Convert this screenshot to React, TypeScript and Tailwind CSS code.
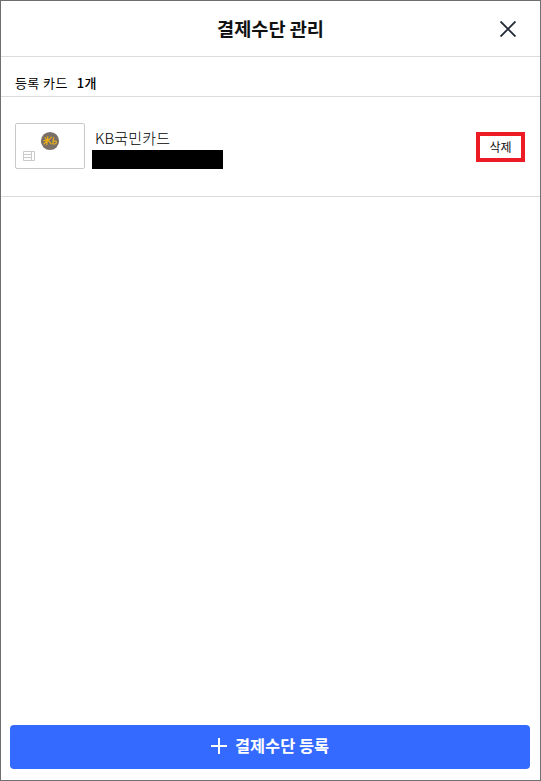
function CloseIcon() {
  return (
    <svg
      className="h-4 w-4"
      viewBox="0 0 16 16"
      fill="none"
      stroke="#222b35"
      strokeWidth="1.9"
    >
      <path d="M0.5 0.5L15.5 15.5M15.5 0.5L0.5 15.5" />
    </svg>
  )
}

function PlusIcon() {
  return (
    <svg className="h-4 w-4" viewBox="0 0 16 16" fill="#fff">
      <path d="M7 0h2v7h7v2H9v7H7V9H0V7h7z" />
    </svg>
  )
}

function CardThumbnail() {
  return (
    <svg
      className="h-[46px] w-[70px] shrink-0"
      viewBox="0 0 70 46"
      fill="none"
    >
      <rect x="0.5" y="0.5" width="69" height="45" rx="1.5" stroke="#c9c9c9" />
      <circle cx="35" cy="18" r="9.1" fill="#7b7068" />
      <g stroke="#f0b010" strokeLinecap="round">
        <path
          d="M28.8 17.8L34.4 16.4M32.8 13.6L31.8 21.8M30 14.6L32 17M32 17.8L29 21M36.4 14.2L33.2 17.4L36.4 21"
          strokeWidth="1.1"
        />
        <path
          d="M38.6 14.6L37.8 20.6C39.2 21.6 42 20.4 41.4 18.8C40.8 17.6 39 17.8 38 19"
          strokeWidth="1.1"
        />
      </g>
      <path
        d="M8.5 28.5h11v9h-11zM16.5 28.5v9M8.5 31.5h8M8.5 34.5h8"
        stroke="#cacaca"
      />
    </svg>
  )
}

const cards = [{ id: 1, name: 'KB국민카드' }]

export default function App() {
  return (
    <div className="flex h-screen flex-col border border-[#6f6f6f] bg-white font-['Noto_Sans_CJK_KR',sans-serif] text-[#111]">
      <header className="flex h-14 shrink-0 items-center border-b border-[#dcdcdf] px-6">
        <h1 className="mb-0.5 ml-4 flex-1 text-center text-[18.6px] leading-6 font-bold whitespace-nowrap">
          결제수단 관리
        </h1>
        <button type="button" aria-label="닫기">
          <CloseIcon />
        </button>
      </header>

      <div className="flex h-10 shrink-0 items-end gap-[9px] border-b border-[#dcdcdf] px-3.5 pb-1 text-[13px] leading-[18px] text-black">
        <span className="tracking-[0.4px]">등록 카드</span>
        <span className="font-medium tracking-[0.4px]">1개</span>
      </div>

      <ul className="flex-1">
        {cards.map((card) => (
          <li
            key={card.id}
            className="flex h-[100px] items-start border-b border-[#dcdcdc] pl-3.5"
          >
            <div className="mt-[26px]">
              <CardThumbnail />
            </div>
            <div className="mt-[29px] ml-[7px] flex-1">
              <p className="ml-[3px] h-6 text-[15px] leading-[23px] font-light tracking-[0.15px] text-black">
                {card.name}
              </p>
              <div className="h-[19px] w-[131px] bg-black" />
            </div>
            <button
              type="button"
              className="mt-[35px] mr-[15px] h-[30px] w-[49px] border-4 border-[#ed1c24] text-[12px] leading-[22px]"
            >
              삭제
            </button>
          </li>
        ))}
      </ul>

      <footer className="pr-2.5 pb-[11px] pl-[9px]">
        <button
          type="button"
          className="flex h-11 w-full items-center justify-center gap-2 rounded bg-[#346aff] pb-0.5 text-[16.4px] font-bold text-white"
        >
          <PlusIcon />
          <span className="-mt-px">결제수단 등록</span>
        </button>
      </footer>
    </div>
  )
}
